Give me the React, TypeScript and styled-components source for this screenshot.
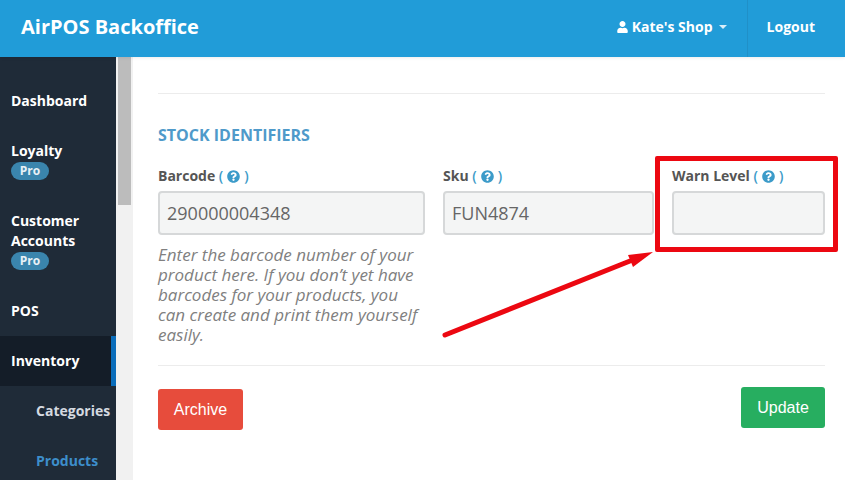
import React from 'react';
import styled, { createGlobalStyle } from 'styled-components';
import { FaUser, FaQuestionCircle } from 'react-icons/fa';

const GlobalStyle = createGlobalStyle`
  html, body {
    margin: 0;
    padding: 0;
    background: #fff;
    overflow: hidden;
  }
  * {
    box-sizing: border-box;
  }
`;

const Page = styled.div`
  position: relative;
  width: 845px;
  height: 480px;
  overflow: hidden;
  font-family: 'Open Sans', sans-serif;
  background: #fff;
`;

const Header = styled.header`
  position: relative;
  z-index: 1;
  display: flex;
  align-items: center;
  justify-content: space-between;
  height: 57px;
  padding-left: 21px;
  background: #219cd8;
  color: #fff;
  box-shadow: 0 1px 3px rgba(0, 0, 0, 0.08);
`;

const Brand = styled.div`
  padding-bottom: 4px;
  font-size: 20px;
  font-weight: 700;
`;

const HeaderRight = styled.div`
  display: flex;
  align-items: center;
  height: 100%;
  font-size: 14px;
  font-weight: 700;
`;

const ShopMenu = styled.div`
  display: flex;
  align-items: center;
  height: 100%;
  padding: 0 20px 4px 0;
  border-right: 1px solid #2090c8;

  svg {
    width: 11px;
    height: 12px;
    margin-right: 4px;
  }
`;

const Caret = styled.span`
  width: 0;
  height: 0;
  margin-left: 6px;
  border-left: 4px solid transparent;
  border-right: 4px solid transparent;
  border-top: 4px solid #d9eef9;
`;

const Logout = styled.div`
  padding: 0 30px 4px 19px;
`;

const Body = styled.div`
  display: flex;
  height: 423px;
`;

const Sidebar = styled.nav`
  flex: 0 0 116px;
  padding-top: 19px;
  background: #1f2b38;
`;

const NavItem = styled.div<{ $active?: boolean; $sub?: boolean; $current?: boolean }>`
  padding: 15px 0 15px ${(p) => (p.$sub ? '36px' : '11px')};
  font-size: 14px;
  font-weight: 700;
  line-height: 20px;
  white-space: nowrap;
  color: ${(p) => (p.$current ? '#3d8ecb' : p.$sub ? '#d5dae0' : '#fff')};
  background: ${(p) => (p.$active ? '#141d28' : 'transparent')};
  border-right: ${(p) => (p.$active ? '5px solid #0a6dbb' : '0')};
`;

const ProBadge = styled.span`
  display: block;
  width: 38px;
  height: 18px;
  margin: 1px 0;
  border-radius: 9px;
  background: #3a85ad;
  font-size: 12px;
  line-height: 18px;
  text-align: center;
  color: #e8f1f6;
`;

const ScrollTrack = styled.div`
  flex: 0 0 17px;
  padding: 0 2px;
  background: #f1f1f1;
`;

const ScrollThumb = styled.div`
  height: 148px;
  background: #bcbcbc;
`;

const Main = styled.main`
  flex: 1;
  padding: 36px 20px 0 25px;
`;

const Divider = styled.hr`
  margin: 0;
  border: 0;
  border-top: 1px solid #ececec;
`;

const SectionTitle = styled.h3`
  margin: 31px 0 0;
  font-size: 16px;
  font-weight: 700;
  line-height: 20px;
  color: #4f9aca;
`;

const FieldRow = styled.div`
  display: grid;
  grid-template-columns: 267px 211px 153px;
  column-gap: 18px;
  margin-top: 20px;
  height: 200px;
`;

const Field = styled.div``;

const Label = styled.label`
  display: block;
  height: 20px;
  padding-top: 1px;
  font-size: 14px;
  font-weight: 700;
  line-height: 20px;
  color: #555;
  white-space: nowrap;
`;

const Help = styled.span`
  font-weight: 600;
  color: #3c9bc9;

  svg {
    width: 13px;
    height: 13px;
    margin: 0 4px;
    vertical-align: -2px;
  }
`;

const Input = styled.div`
  height: 44px;
  margin-top: 6px;
  padding-left: 7px;
  border: 2px solid #d6d8d9;
  border-radius: 4px;
  background: #f4f5f5;
  font-size: 18px;
  line-height: 41px;
  color: #666;
`;

const HintText = styled.p`
  margin: 10px 0 0;
  font-size: 17px;
  font-style: italic;
  line-height: 20px;
  color: #808080;
`;

const Actions = styled.div`
  display: flex;
  justify-content: space-between;
  align-items: flex-start;
  margin-top: 21px;
`;

const Button = styled.button<{ $color: string }>`
  height: 41px;
  padding: 0;
  border: 0;
  border-radius: 3px;
  font-family: 'Liberation Sans', sans-serif;
  font-size: 16px;
  color: #fff;
  background: ${(p) => p.$color};
`;

const ArchiveButton = styled(Button)`
  width: 85px;
  margin-top: 2px;
`;

const UpdateButton = styled(Button)`
  width: 84px;
`;

const HighlightBox = styled.div`
  position: absolute;
  left: 655px;
  top: 156px;
  width: 183px;
  height: 96px;
  border: 5px solid #ec0811;
  border-radius: 2px;
`;

const Arrow = styled.svg`
  position: absolute;
  left: 440px;
  top: 248px;
`;

export default function App() {
  return (
    <Page>
      <GlobalStyle />
      <Header>
        <Brand>AirPOS Backoffice</Brand>
        <HeaderRight>
          <ShopMenu>
            <FaUser />
            Kate's Shop
            <Caret />
          </ShopMenu>
          <Logout>Logout</Logout>
        </HeaderRight>
      </Header>
      <Body>
        <Sidebar>
          <NavItem>Dashboard</NavItem>
          <NavItem>
            Loyalty
            <ProBadge>Pro</ProBadge>
          </NavItem>
          <NavItem>
            Customer
            <br />
            Accounts
            <ProBadge>Pro</ProBadge>
          </NavItem>
          <NavItem>POS</NavItem>
          <NavItem $active>Inventory</NavItem>
          <NavItem $sub>Categories</NavItem>
          <NavItem $sub $current>
            Products
          </NavItem>
        </Sidebar>
        <ScrollTrack>
          <ScrollThumb />
        </ScrollTrack>
        <Main>
          <Divider />
          <SectionTitle>STOCK IDENTIFIERS</SectionTitle>
          <FieldRow>
            <Field>
              <Label>
                Barcode{' '}
                <Help>
                  (<FaQuestionCircle />)
                </Help>
              </Label>
              <Input>290000004348</Input>
              <HintText>
                Enter the barcode number of your product here. If you don’t yet
                have barcodes for your products, you can create and print them
                yourself easily.
              </HintText>
            </Field>
            <Field>
              <Label>
                Sku{' '}
                <Help>
                  (<FaQuestionCircle />)
                </Help>
              </Label>
              <Input>FUN4874</Input>
            </Field>
            <Field>
              <Label>
                Warn Level{' '}
                <Help>
                  (<FaQuestionCircle />)
                </Help>
              </Label>
              <Input />
            </Field>
          </FieldRow>
          <Divider />
          <Actions>
            <ArchiveButton $color="#e74c3c">Archive</ArchiveButton>
            <UpdateButton $color="#27ae60">Update</UpdateButton>
          </Actions>
        </Main>
      </Body>
      <HighlightBox />
      <Arrow width="220" height="94" viewBox="0 0 220 94">
        <line x1="5" y1="87" x2="190" y2="13" stroke="#ec0811" strokeWidth="5" strokeLinecap="round" />
        <polygon points="213,4 188,7 193,19" fill="#ec0811" />
      </Arrow>
    </Page>
  );
}
